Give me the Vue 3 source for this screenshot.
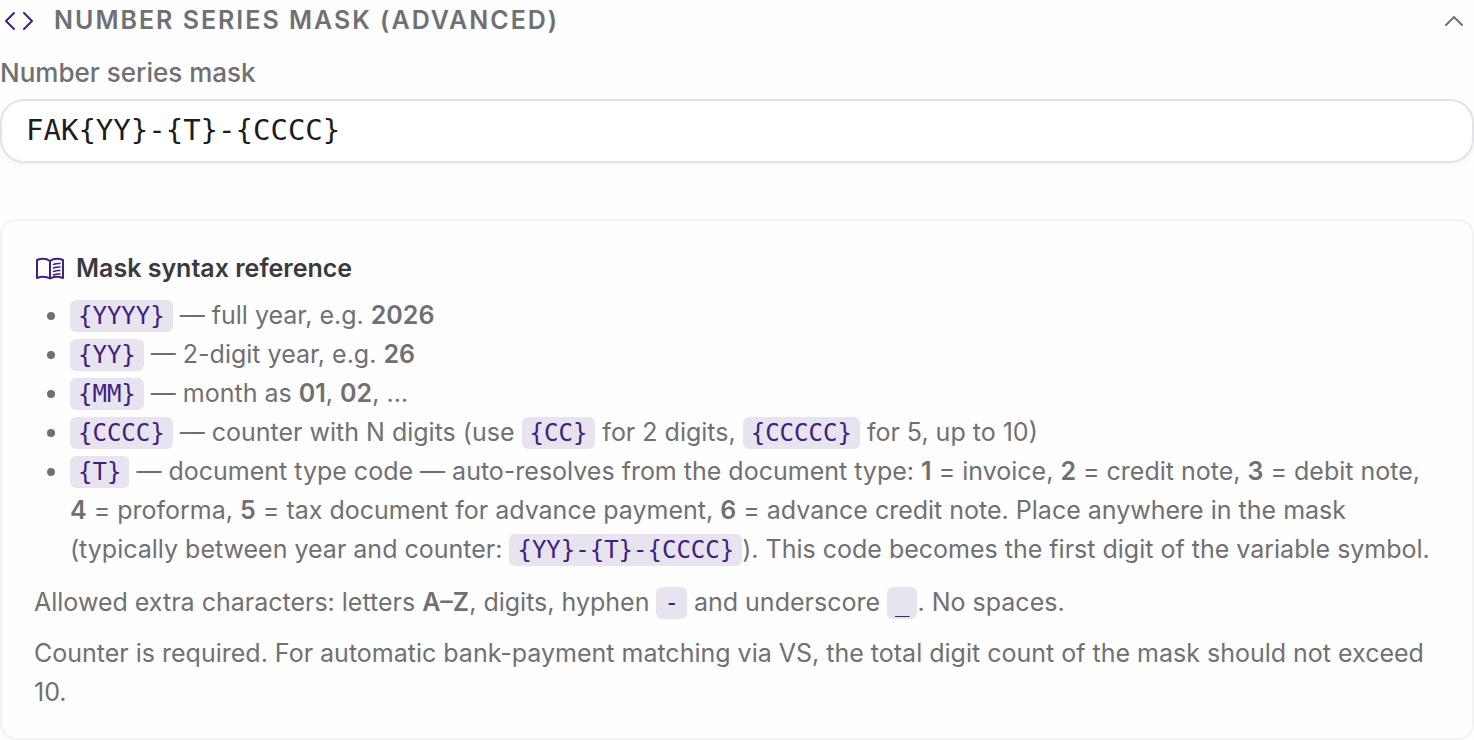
<template>
  <section class="mask-section">
    <button class="section-toggle" type="button" :aria-expanded="expanded" @click="expanded = !expanded">
      <svg class="code-icon" viewBox="0 0 32 24" aria-hidden="true">
        <path d="M10 4 L2 12 L10 20 M20 4 L28 12 L20 20" />
      </svg>
      <span class="section-title">Number series mask (advanced)</span>
      <svg class="chevron" :class="{ closed: !expanded }" viewBox="0 0 20 12" aria-hidden="true">
        <path d="M2 10 L10 2 L18 10" />
      </svg>
    </button>

    <div v-if="expanded" class="section-body">
      <label class="field-label" for="series-mask">Number series mask</label>
      <input id="series-mask" v-model="mask" class="field-input" type="text" spellcheck="false" autocomplete="off" />

      <div class="reference">
        <h3 class="reference-title">
          <svg class="book-icon" viewBox="0 0 32 24" aria-hidden="true">
            <path d="M16 4 C12.5 1.5 7 1.5 3 3 V21 C7 19.5 12.5 19.5 16 21.5 C19.5 19.5 25 19.5 29 21 V3 C25 1.5 19.5 1.5 16 4 Z M16 4 V21.5" />
            <path class="book-lines" d="M19.5 7.5 Q22.5 6.2 26 6.5 M19.5 11 Q22.5 9.7 26 10 M19.5 14.5 Q22.5 13.2 26 13.5 M19.5 18 Q22.5 16.7 26 17" />
          </svg>
          <span>Mask syntax reference</span>
        </h3>

        <ul class="tokens">
          <li><code>{YYYY}</code> — full year, e.g. <strong>2026</strong></li>
          <li><code>{YY}</code> — 2-digit year, e.g. <strong>26</strong></li>
          <li><code>{MM}</code> — month as <strong>01</strong>, <strong>02</strong>, …</li>
          <li><code>{CCCC}</code> — counter with N digits (use <code>{CC}</code> for 2 digits, <code>{CCCCC}</code> for 5, up to 10)</li>
          <li>
            <code>{T}</code> — document type code — auto-resolves from the document type:
            <template v-for="(type, i) in docTypes" :key="type"><strong>{{ i + 1 }}</strong> = {{ type }}{{ i < docTypes.length - 1 ? ', ' : '. ' }}</template>
            Place anywhere in the mask (typically between year and counter:
            <code>{YY}-{T}-{CCCC}</code>). This code becomes the first digit of the variable symbol.
          </li>
        </ul>

        <p>Allowed extra characters: letters <strong>A–Z</strong>, digits, hyphen <code>-</code> and underscore <code>_</code>. No spaces.</p>
        <p>Counter is required. For automatic bank-payment matching via VS, the total digit count of the mask should not exceed 10.</p>
      </div>
    </div>
  </section>
</template>

<script setup>
import { ref } from 'vue';

const expanded = ref(true);
const mask = ref('FAK{YY}-{T}-{CCCC}');

// index + 1 is the code that replaces {T}
const docTypes = [
  'invoice',
  'credit note',
  'debit note',
  'proforma',
  'tax document for advance payment',
  'advance credit note'
];
</script>

<style>
body {
  margin: 0;
  background: #fefefe;
}
</style>

<style scoped>
.mask-section {
  font-family: Inter, "Liberation Sans", sans-serif;
  font-size: 25px;
  line-height: 39px;
  color: #707074;
}

.section-toggle {
  display: flex;
  align-items: center;
  width: 100%;
  padding: 1px 10px 0 4px;
  border: 0;
  background: none;
  color: inherit;
  font: inherit;
  text-align: left;
  cursor: pointer;
}

.section-title {
  flex: 1;
  margin-left: 18px;
  font-weight: 600;
  letter-spacing: 2px;
  text-transform: uppercase;
}

svg {
  flex: none;
  fill: none;
  stroke: currentColor;
  stroke-width: 2;
  stroke-linecap: round;
  stroke-linejoin: round;
}

.code-icon {
  width: 32px;
  height: 24px;
  color: #3f2180;
}

.chevron {
  width: 20px;
  height: 12px;
}

.chevron.closed {
  transform: rotate(180deg);
}

.section-body {
  padding-top: 13px;
}

.field-label {
  display: block;
  font-size: 26px;
  font-weight: 500;
}

.field-input {
  display: block;
  box-sizing: border-box;
  width: 100%;
  height: 64px;
  margin-top: 7px;
  padding: 0 24px 2px;
  border: 2px solid #e3e4e8;
  border-radius: 24px;
  background: #fff;
  box-shadow: 0 2px 4px rgba(0, 0, 0, 0.05);
  color: #1d1d20;
  font-family: "DejaVu Sans Mono", "Liberation Mono", monospace;
  font-size: 29px;
}

.reference {
  margin-top: 56px;
  padding: 28px 32px 26px;
  border: 2px solid #f2f2f4;
  border-radius: 16px;
}

.reference-title {
  display: flex;
  align-items: center;
  gap: 10px;
  margin: 0 0 8px;
  color: #3a3a3e;
  font-size: 25px;
  font-weight: 600;
}

.book-icon {
  width: 32px;
  height: 24px;
  color: #3f2180;
}

.book-lines {
  stroke-width: 1.6;
}

.tokens {
  margin: 0 0 14px;
  padding-left: 36px;
}

p {
  margin: 0 0 12px;
}

p:last-child {
  margin-bottom: 0;
}

strong {
  font-weight: 600;
}

code {
  padding: 2px 8px;
  border-radius: 6px;
  background: #e8e4ef;
  color: #3f2180;
  font-family: "DejaVu Sans Mono", "Liberation Mono", monospace;
  font-size: 24px;
  line-height: 1;
}
</style>
